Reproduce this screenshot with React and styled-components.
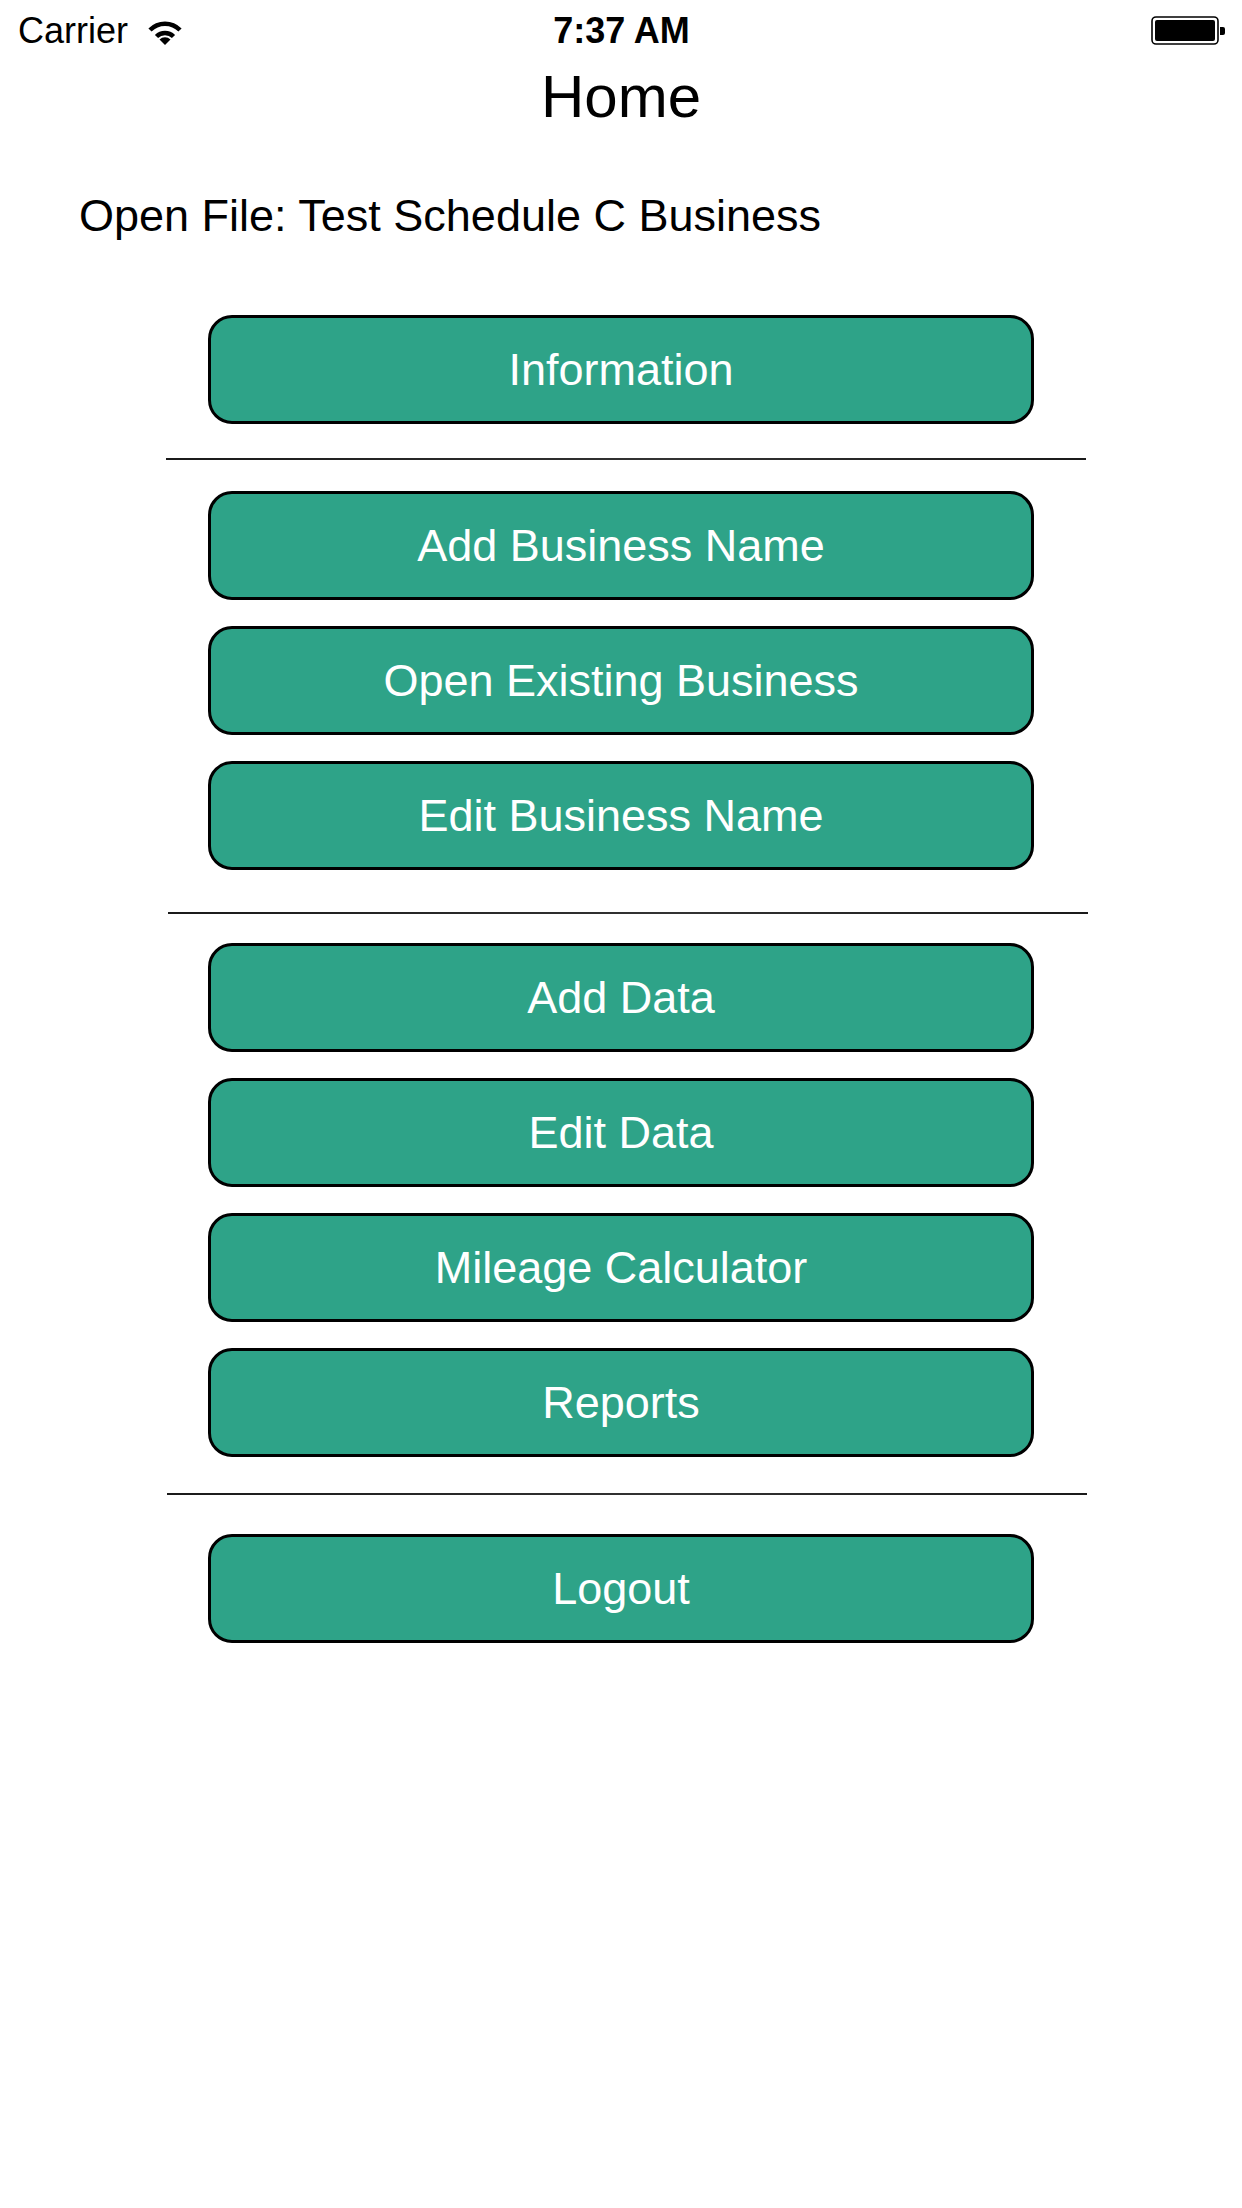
import React from "react";
import styled, { createGlobalStyle } from "styled-components";

const GlobalStyle = createGlobalStyle`
  body {
    margin: 0;
    background: #fff;
    font-family: "Liberation Sans", Arial, sans-serif;
  }
`;

const Screen = styled.div`
  width: 1242px;
  height: 2208px;
  background: #fff;
  display: flex;
  flex-direction: column;
`;

const StatusBar = styled.div`
  height: 62px;
  display: grid;
  grid-template-columns: 1fr auto 1fr;
  align-items: center;
  padding: 0 17px 0 18px;
  font-size: 36px;
  color: #000;
`;

const Left = styled.div`
  display: flex;
  align-items: center;
  gap: 19px;
`;

const Time = styled.div`
  font-weight: 700;
`;

const Right = styled.div`
  display: flex;
  justify-content: flex-end;
  align-items: center;
`;

const Title = styled.h1`
  margin: 0;
  font-size: 60px;
  font-weight: 400;
  line-height: 70px;
  text-align: center;
`;

const OpenFile = styled.p`
  margin: 57px 0 0 79px;
  font-size: 45px;
  line-height: 54px;
`;

const Menu = styled.div`
  margin-top: 72px;
  display: flex;
  flex-direction: column;
  align-items: center;
`;

const MenuButton = styled.button`
  box-sizing: border-box;
  width: 826px;
  height: 109px;
  margin-top: ${(p) => p.$top || 26}px;
  background: #2ea388;
  border: 3px solid #000;
  border-radius: 24px;
  color: #fff;
  font-family: "Liberation Sans", Arial, sans-serif;
  font-size: 45px;
  padding: 0;
  cursor: pointer;
  &:first-child {
    margin-top: 0;
  }
`;

const Separator = styled.div`
  width: 920px;
  height: 2px;
  background: linear-gradient(to right, #1a1a1a, #333 55%, #1a1a1a);
  margin: ${(p) => p.$top}px 0 0 ${(p) => p.$shift}px;
`;

function Wifi() {
  return (
    <svg width="36" height="29" viewBox="0 0 36 29">
      <path d="M3 13 A 21 21 0 0 1 33 13" fill="none" stroke="#000" strokeWidth="4.5" />
      <path d="M9.5 19.5 A 12 12 0 0 1 26.5 19.5" fill="none" stroke="#000" strokeWidth="4.5" />
      <path d="M18 28 L12.5 22.5 A 7.8 7.8 0 0 1 23.5 22.5 Z" fill="#000" />
    </svg>
  );
}

function Battery() {
  return (
    <svg width="74" height="30" viewBox="0 0 74 30">
      <rect x="1" y="1" width="66" height="27" rx="4" fill="none" stroke="#000" strokeWidth="1.6" />
      <rect x="4" y="4" width="60" height="21" rx="2" fill="#000" />
      <path d="M69 11 h3 a2 2 0 0 1 2 2 v4 a2 2 0 0 1 -2 2 h-3 Z" fill="#000" />
    </svg>
  );
}

export default function App() {
  return (
    <Screen>
      <GlobalStyle />
      <StatusBar>
        <Left>
          <span>Carrier</span>
          <Wifi />
        </Left>
        <Time>7:37 AM</Time>
        <Right>
          <Battery />
        </Right>
      </StatusBar>
      <Title>Home</Title>
      <OpenFile>Open File: Test Schedule C Business</OpenFile>
      <Menu>
        <MenuButton>Information</MenuButton>
        <Separator $top={34} $shift={9} />
        <MenuButton $top={31}>Add Business Name</MenuButton>
        <MenuButton>Open Existing Business</MenuButton>
        <MenuButton>Edit Business Name</MenuButton>
        <Separator $top={42} $shift={13} />
        <MenuButton $top={29}>Add Data</MenuButton>
        <MenuButton>Edit Data</MenuButton>
        <MenuButton>Mileage Calculator</MenuButton>
        <MenuButton>Reports</MenuButton>
        <Separator $top={36} $shift={12} />
        <MenuButton $top={39}>Logout</MenuButton>
      </Menu>
    </Screen>
  );
}
